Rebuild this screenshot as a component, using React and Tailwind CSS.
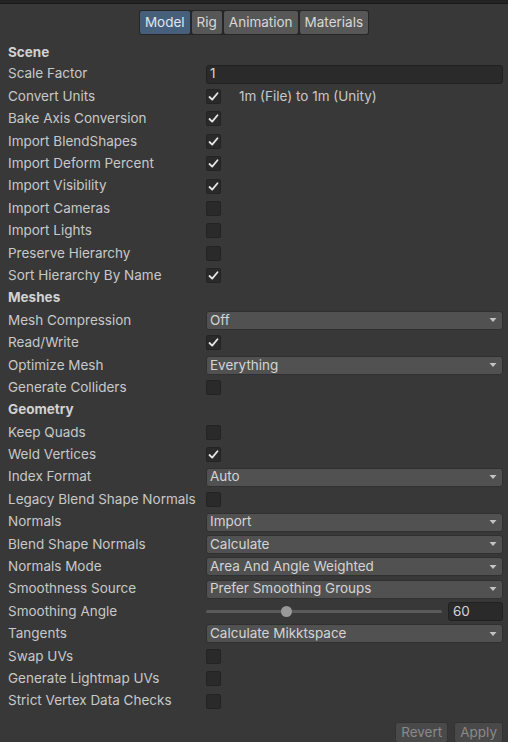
import React from "react"

const Check = ({ on }) => (
  <div className="w-[15px] h-[15px] rounded-[2px] bg-[#2a2a2a] border border-[#232323] flex items-center justify-center">
    {on && (
      <svg width="11" height="11" viewBox="0 0 11 11">
        <path d="M1.5 6 L4.2 8.6 L9.5 2.2" stroke="#e6e6e6" strokeWidth="1.8" fill="none" strokeLinecap="round" strokeLinejoin="round" />
      </svg>
    )}
  </div>
)

const Dropdown = ({ value }) => (
  <div className="flex-1 h-[19px] bg-[#515151] border border-[#303030] rounded-[3px] flex items-center justify-between pl-[3px] pr-[5px] text-[#d4d4d4]">
    <span>{value}</span>
    <svg width="8" height="6" viewBox="0 0 8 6">
      <path d="M0.5 1 L7.5 1 L4 5 Z" fill="#c4c4c4" />
    </svg>
  </div>
)

const Row = ({ label, children }) => (
  <div className="h-[22.4px] flex items-center">
    <div className="w-[206px] pl-[8px] shrink-0 text-[#c8c8c8] whitespace-nowrap">{label}</div>
    <div className="flex-1 flex items-center pr-[5px]">{children}</div>
  </div>
)

const Header = ({ title, first }) => (
  <div className={`${first ? "h-[20px]" : "h-[22.4px]"} flex items-center pl-[8px] font-bold text-[#d2d2d2]`}>{title}</div>
)

export default function App() {
  const tabs = ["Model", "Rig", "Animation", "Materials"]
  return (
    <div className="w-[508px] h-[742px] bg-[#383838] overflow-hidden text-[13.5px] leading-none" style={{ fontFamily: "Inter, 'Noto Sans', sans-serif" }}>
      <div className="h-[4px] bg-[#232323] border-b border-[#1a1a1a]" />
      <div className="flex justify-center pt-[6px]">
        <div className="flex gap-[2px] bg-[#262626] p-[1px] rounded-[3px]">
          {tabs.map((t, i) => (
            <div
              key={t}
              className={`h-[23px] flex items-center px-[5px] rounded-[2px] ${i === 0 ? "bg-[#46607c] text-[#e0e6ee]" : "bg-[#575757] text-[#d8d8d8]"}`}
            >
              {t}
            </div>
          ))}
        </div>
      </div>
      <div className="pt-[8px]">
        <Header title="Scene" first />
        <Row label="Scale Factor">
          <div className="flex-1 h-[19px] bg-[#2a2a2a] border border-[#212121] rounded-[3px] flex items-center pl-[3px] text-[#d4d4d4]">1</div>
        </Row>
        <Row label="Convert Units">
          <Check on />
          <span className="ml-[18px] text-[#c8c8c8]">1m (File) to 1m (Unity)</span>
        </Row>
        <Row label="Bake Axis Conversion"><Check on /></Row>
        <Row label="Import BlendShapes"><Check on /></Row>
        <Row label="Import Deform Percent"><Check on /></Row>
        <Row label="Import Visibility"><Check on /></Row>
        <Row label="Import Cameras"><Check /></Row>
        <Row label="Import Lights"><Check /></Row>
        <Row label="Preserve Hierarchy"><Check /></Row>
        <Row label="Sort Hierarchy By Name"><Check on /></Row>
        <Header title="Meshes" />
        <Row label="Mesh Compression"><Dropdown value="Off" /></Row>
        <Row label="Read/Write"><Check on /></Row>
        <Row label="Optimize Mesh"><Dropdown value="Everything" /></Row>
        <Row label="Generate Colliders"><Check /></Row>
        <Header title="Geometry" />
        <Row label="Keep Quads"><Check /></Row>
        <Row label="Weld Vertices"><Check on /></Row>
        <Row label="Index Format"><Dropdown value="Auto" /></Row>
        <Row label="Legacy Blend Shape Normals"><Check /></Row>
        <Row label="Normals"><Dropdown value="Import" /></Row>
        <Row label="Blend Shape Normals"><Dropdown value="Calculate" /></Row>
        <Row label="Normals Mode"><Dropdown value="Area And Angle Weighted" /></Row>
        <Row label="Smoothness Source"><Dropdown value="Prefer Smoothing Groups" /></Row>
        <Row label="Smoothing Angle">
          <div className="relative w-[236px] h-[12px] flex items-center">
            <div className="w-full h-[3px] bg-[#5a5a5a] rounded-full" />
            <div className="absolute left-[75px] w-[11px] h-[11px] rounded-full bg-[#999999]" />
          </div>
          <div className="ml-[6px] flex-1 h-[19px] bg-[#2a2a2a] border border-[#212121] rounded-[3px] flex items-center pl-[4px] text-[#d4d4d4]">60</div>
        </Row>
        <Row label="Tangents"><Dropdown value="Calculate Mikktspace" /></Row>
        <Row label="Swap UVs"><Check /></Row>
        <Row label="Generate Lightmap UVs"><Check /></Row>
        <Row label="Strict Vertex Data Checks"><Check /></Row>
      </div>
      <div className="flex justify-end gap-[6px] pr-[5px] pt-[10px]">
        <div className="h-[21px] px-[5px] flex items-center bg-[#494949] border border-[#333] rounded-[3px] text-[#8a8a8a]">Revert</div>
        <div className="h-[21px] px-[5px] flex items-center bg-[#494949] border border-[#333] rounded-[3px] text-[#8a8a8a]">Apply</div>
      </div>
    </div>
  )
}
